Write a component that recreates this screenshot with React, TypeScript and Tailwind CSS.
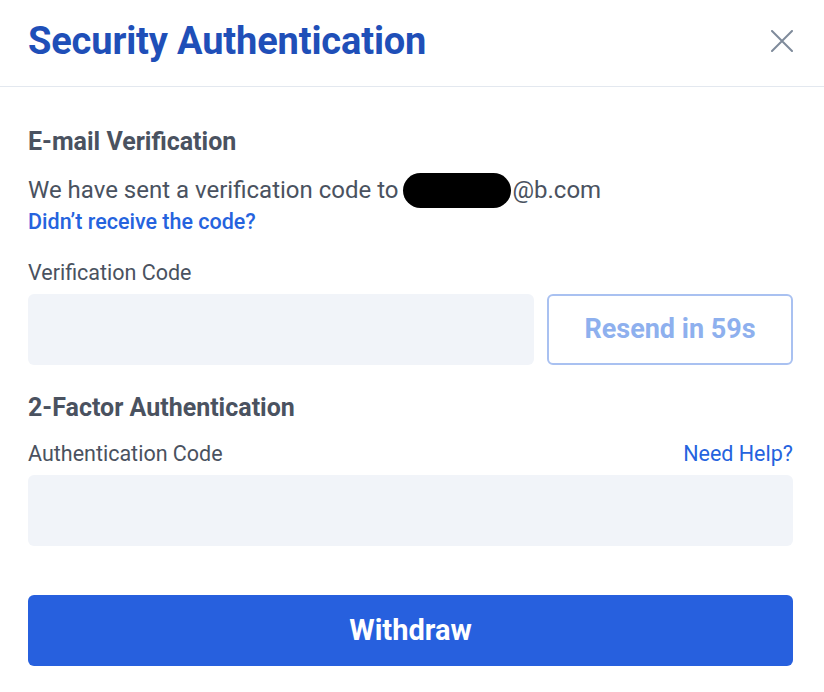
import React from "react";

export default function App() {
  const font = { fontFamily: "Roboto, 'Noto Sans', sans-serif" };
  return (
    <div className="w-[824px] h-[692px] bg-white overflow-hidden" style={font}>
      <div className="h-[87px] flex items-center justify-between pl-[28px] pr-[31px] border-b border-[#e3e8ef]">
        <h1 className="text-[38px] font-bold text-[#1f4fb8] tracking-[-0.15px] leading-none mt-[-4px]">
          Security Authentication
        </h1>
        <svg width="22" height="22" viewBox="0 0 22 22" className="mt-[-4px]">
          <path d="M1 1 L21 21 M21 1 L1 21" stroke="#7f8b9b" strokeWidth="2" strokeLinecap="round" />
        </svg>
      </div>
      <div className="px-[28px] pr-[31px] pt-[40px]">
        <div className="text-[25px] font-bold text-[#4a5260] leading-[30px]">E-mail Verification</div>
        <div className="mt-[15px] flex items-center text-[24px] text-[#4a5260] leading-[36px] h-[36px]">
          <span>We have sent a verification code to</span>
          <span className="inline-block w-[108px] h-[35px] rounded-full bg-black ml-[5px] mr-[1px]" />
          <span>@b.com</span>
        </div>
        <div className="text-[21.5px] font-medium text-[#2563de] leading-[28px]">Didn’t receive the code?</div>
        <div className="mt-[23px] text-[21.5px] text-[#4a5260] leading-[28px]">Verification Code</div>
        <div className="mt-[7px] flex gap-[13px]">
          <div className="w-[506px] h-[71px] rounded-[6px] bg-[#f1f4f9]" />
          <button className="flex-1 h-[71px] rounded-[6px] border-2 border-[#a9c1f1] text-[#8eb0ee] text-[27px] font-bold">
            Resend in 59s
          </button>
        </div>
        <div className="mt-[28px] text-[25px] font-bold text-[#4a5260] leading-[30px]">2-Factor Authentication</div>
        <div className="mt-[17px] flex justify-between text-[21.5px] leading-[28px]">
          <span className="text-[#4a5260]">Authentication Code</span>
          <span className="text-[#2563de]">Need Help?</span>
        </div>
        <div className="mt-[7px] h-[71px] rounded-[6px] bg-[#f1f4f9]" />
        <button className="mt-[49px] w-full h-[71px] rounded-[6px] bg-[#2760de] text-white text-[29px] font-bold">
          Withdraw
        </button>
      </div>
    </div>
  );
}
